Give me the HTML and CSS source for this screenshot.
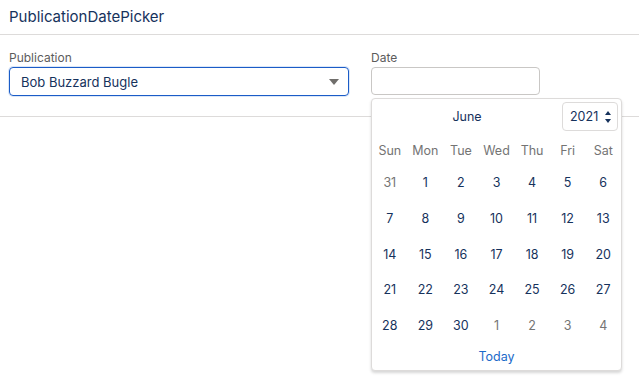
FILE: index.html
```html
<!DOCTYPE html>
<html lang="en">
<head>
    <meta charset="UTF-8">
    <title>PublicationDatePicker</title>
    <link rel="stylesheet" href="styles.css">
</head>
<body>
    <div class="card">
        <div class="card-header">PublicationDatePicker</div>
        <div class="card-body">
            <div class="field field-publication">
                <label class="field-label">Publication</label>
                <div class="select focused">
                    <span>Bob Buzzard Bugle</span>
                    <span class="caret"></span>
                </div>
            </div>
            <div class="field field-date">
                <label class="field-label">Date</label>
                <div class="date-input"></div>

                <div class="datepicker">
                    <div class="dp-header">
                        <div class="dp-month">June</div>
                        <div class="dp-year">
                            <span>2021</span>
                            <span class="spinner">
                                <span class="up"></span>
                                <span class="down"></span>
                            </span>
                        </div>
                    </div>
                    <div class="dp-grid">
                        <div class="dow">Sun</div>
                        <div class="dow">Mon</div>
                        <div class="dow">Tue</div>
                        <div class="dow">Wed</div>
                        <div class="dow">Thu</div>
                        <div class="dow">Fri</div>
                        <div class="dow">Sat</div>

                        <div class="day other">31</div>
                        <div class="day">1</div>
                        <div class="day">2</div>
                        <div class="day">3</div>
                        <div class="day">4</div>
                        <div class="day">5</div>
                        <div class="day">6</div>

                        <div class="day">7</div>
                        <div class="day">8</div>
                        <div class="day">9</div>
                        <div class="day">10</div>
                        <div class="day">11</div>
                        <div class="day">12</div>
                        <div class="day">13</div>

                        <div class="day">14</div>
                        <div class="day">15</div>
                        <div class="day">16</div>
                        <div class="day">17</div>
                        <div class="day">18</div>
                        <div class="day">19</div>
                        <div class="day">20</div>

                        <div class="day">21</div>
                        <div class="day">22</div>
                        <div class="day">23</div>
                        <div class="day">24</div>
                        <div class="day">25</div>
                        <div class="day">26</div>
                        <div class="day">27</div>

                        <div class="day">28</div>
                        <div class="day">29</div>
                        <div class="day">30</div>
                        <div class="day other">1</div>
                        <div class="day other">2</div>
                        <div class="day other">3</div>
                        <div class="day other">4</div>
                    </div>
                    <div class="dp-today">Today</div>
                </div>
            </div>
        </div>
    </div>
</body>
</html>
```

FILE: styles.css
```css
body {
    margin: 0;
    font-family: Inter, "Noto Sans", sans-serif;
    color: #16325c;
    background-color: white;
}

.card {
    min-height: 384px;
}

.card-header {
    padding: 7px 9px;
    font-size: 15px;
    line-height: 20px;
    color: #16325c;
    border-bottom: 1px solid #dddbda;
}

.card-body {
    display: flex;
    padding: 14px 0 20px 9px;
    border-bottom: 1px solid #dddbda;
}

.field-label {
    display: block;
    font-size: 12px;
    line-height: 18px;
    color: #5c5c5c;
}

.field-publication {
    width: 340px;
    margin-right: 22px;
}

.field-date {
    position: relative;
    width: 169px;
}

.select {
    box-sizing: border-box;
    height: 29px;
    display: flex;
    align-items: center;
    justify-content: space-between;
    padding: 0 8px 0 11px;
    font-size: 13px;
    color: #16325c;
    border: 1px solid #c9c7c5;
    border-radius: 4px;
}

.select.focused {
    border-color: #1b5cc7;
    box-shadow: 0 0 0 1px #dbe7f8;
}

.caret {
    width: 0;
    height: 0;
    border-left: 5px solid transparent;
    border-right: 5px solid transparent;
    border-top: 6px solid #706e6b;
    margin-right: 1px;
}

.date-input {
    box-sizing: border-box;
    height: 28px;
    border: 1px solid #c9c7c5;
    border-radius: 4px;
}

.datepicker {
    position: absolute;
    top: 49px;
    left: 0;
    z-index: 10;
    box-sizing: border-box;
    width: 251px;
    height: 273px;
    background-color: white;
    border: 1px solid #dddbda;
    border-radius: 4px;
    box-shadow: 0 2px 3px rgba(0, 0, 0, 0.16);
    font-size: 12.5px;
}

.dp-header {
    display: flex;
    align-items: center;
    padding: 3px 3px 4px 0;
}

.dp-month {
    flex: 1;
    text-align: center;
    color: #16325c;
}

.dp-year {
    box-sizing: border-box;
    width: 56px;
    height: 29px;
    display: flex;
    align-items: center;
    justify-content: space-between;
    padding: 0 6px 0 7px;
    border: 1px solid #dddbda;
    border-radius: 4px;
    color: #16325c;
}

.spinner {
    display: flex;
    flex-direction: column;
    gap: 4px;
}

.spinner .up {
    border-left: 3px solid transparent;
    border-right: 3px solid transparent;
    border-bottom: 4px solid #16325c;
}

.spinner .down {
    border-left: 3px solid transparent;
    border-right: 3px solid transparent;
    border-top: 4px solid #16325c;
}

.dp-grid {
    display: grid;
    grid-template-columns: repeat(7, 1fr);
    grid-template-rows: 30px repeat(5, 35.7px);
    align-items: center;
    text-align: center;
}

.dow {
    color: #747474;
}

.day {
    color: #16325c;
}

.day.other {
    color: #747474;
}

.dp-today {
    height: 28px;
    line-height: 28px;
    text-align: center;
    color: #1b6ac9;
}
```
